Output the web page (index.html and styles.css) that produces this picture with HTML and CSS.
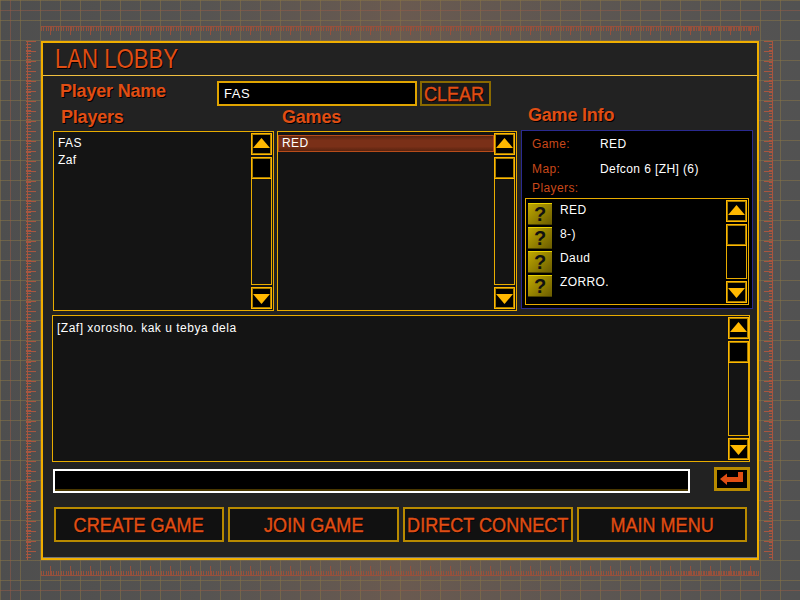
FILE: index.html
```html
<!DOCTYPE html>
<html lang="en">
<head>
    <meta charset="UTF-8">
    <title>LAN Lobby</title>
    <link rel="stylesheet" href="styles.css">
</head>
<body>
    <div class="screen">
        <div class="ruler ruler-top"></div>
        <div class="ruler ruler-left"></div>

        <main class="panel">
            <h1 class="title"><span class="narrow">LAN LOBBY</span></h1>

            <div class="name-row">
                <label class="heading name-label">Player Name</label>
                <div class="field name-field">FAS</div>
                <button class="clear-btn" type="button"><span class="narrow">CLEAR</span></button>
            </div>

            <div class="lists">
                <section class="col">
                    <h2 class="heading col-heading">Players</h2>
                    <div class="list">
                        <ul class="rows">
                            <li>FAS</li>
                            <li>Zaf</li>
                        </ul>
                        <div class="scrollbar">
                            <div class="arrow up"></div>
                            <div class="track"><div class="thumb"></div></div>
                            <div class="arrow down"></div>
                        </div>
                    </div>
                </section>

                <section class="col">
                    <h2 class="heading col-heading games-heading">Games</h2>
                    <div class="list">
                        <ul class="rows game-rows">
                            <li class="selected">RED</li>
                        </ul>
                        <div class="scrollbar">
                            <div class="arrow up"></div>
                            <div class="track"><div class="thumb"></div></div>
                            <div class="arrow down"></div>
                        </div>
                    </div>
                </section>

                <section class="col info-col">
                    <h2 class="heading info-heading">Game Info</h2>
                    <div class="info">
                        <div class="info-row game-row"><span class="info-label">Game:</span><span>RED</span></div>
                        <div class="info-row map-row"><span class="info-label">Map:</span><span>Defcon 6 [ZH] (6)</span></div>
                        <div class="info-row players-row"><span class="info-label">Players:</span></div>
                        <div class="info-players">
                            <ul class="player-rows">
                                <li><span class="badge">?</span>RED</li>
                                <li><span class="badge">?</span>8-)</li>
                                <li><span class="badge">?</span>Daud</li>
                                <li><span class="badge">?</span>ZORRO.</li>
                            </ul>
                            <div class="scrollbar">
                                <div class="arrow up"></div>
                                <div class="track"><div class="thumb"></div></div>
                                <div class="arrow down"></div>
                            </div>
                        </div>
                    </div>
                </section>
            </div>

            <div class="list chat">
                <div class="chat-text">[Zaf] xorosho. kak u tebya dela</div>
                <div class="scrollbar">
                    <div class="arrow up"></div>
                    <div class="track"><div class="thumb"></div></div>
                    <div class="arrow down"></div>
                </div>
            </div>

            <div class="send-row">
                <div class="chat-input"></div>
                <button class="send-btn" type="button">
                    <svg width="24" height="16" viewBox="0 0 24 16">
                        <path d="M0 8 L7 2.5 V6 H18 V1 H23 V11 H7 V14 Z" fill="#e04e14"/>
                    </svg>
                </button>
            </div>

            <div class="actions">
                <button class="action-btn" type="button"><span class="narrow">CREATE GAME</span></button>
                <button class="action-btn" type="button"><span class="narrow">JOIN GAME</span></button>
                <button class="action-btn" type="button"><span class="narrow">DIRECT CONNECT</span></button>
                <button class="action-btn" type="button"><span class="narrow">MAIN MENU</span></button>
            </div>
        </main>

        <div class="ruler ruler-right"></div>
        <div class="ruler ruler-bottom"></div>
    </div>
</body>
</html>
```

FILE: styles.css
```css
* {
    box-sizing: border-box;
}

body {
    margin: 0;
    width: 800px;
    height: 600px;
    overflow: hidden;
    font-family: "Liberation Sans", Arial, sans-serif;
    color: #fff;
    background-color: #505050;
}

ul {
    list-style: none;
    margin: 0;
    padding: 0;
}

button {
    font-family: inherit;
    padding: 0;
}

.narrow {
    display: inline-block;
    flex: none;
    transform: scaleX(0.86);
    white-space: nowrap;
}

.screen {
    width: 800px;
    height: 600px;
    display: grid;
    grid-template-columns: 41px 718px 41px;
    grid-template-rows: 41px 519px 40px;
    background:
        linear-gradient(rgba(150, 90, 70, 0.5), rgba(150, 90, 70, 0.5)) 0 10px / 100% 1px no-repeat,
        linear-gradient(rgba(150, 90, 70, 0.5), rgba(150, 90, 70, 0.5)) 0 590px / 100% 1px no-repeat,
        linear-gradient(rgba(150, 90, 70, 0.5), rgba(150, 90, 70, 0.5)) 10px 0 / 1px 100% no-repeat,
        repeating-linear-gradient(90deg, rgba(135, 115, 70, 0.55) 0 1px, transparent 1px 20px),
        repeating-linear-gradient(180deg, rgba(135, 115, 70, 0.55) 0 1px, transparent 1px 20px),
        linear-gradient(90deg, #4e4e4e 0, #565452 25%, #6a5a50 50%, #5c5652 75%, #525252 100%);
}

/* rulers */
.ruler-top {
    grid-column: 2;
    grid-row: 1;
    height: 10px;
    margin-top: 26px;
    background:
        linear-gradient(#96503c, #96503c) 0 0 / 100% 1px no-repeat,
        repeating-linear-gradient(90deg, #96503c 0 1px, transparent 1px 20px) 9px 0 / 100% 9px no-repeat,
        repeating-linear-gradient(90deg, #96503c 0 1px, transparent 1px 2.5px) 0 0 / 100% 5px no-repeat;
}

.ruler-bottom {
    grid-column: 2;
    grid-row: 3;
    height: 10px;
    margin-top: 6px;
    background:
        linear-gradient(#96503c, #96503c) 0 100% / 100% 1px no-repeat,
        repeating-linear-gradient(90deg, #96503c 0 1px, transparent 1px 20px) 9px 100% / 100% 10px no-repeat,
        repeating-linear-gradient(90deg, #96503c 0 1px, transparent 1px 2.5px) 0 100% / 100% 5px no-repeat;
}

.ruler-left {
    grid-column: 1;
    grid-row: 2;
    width: 14px;
    margin-left: 26px;
    background:
        linear-gradient(#a8553f, #a8553f) 1px 0 / 1px 100% no-repeat,
        repeating-linear-gradient(180deg, #a8553f 0 1px, transparent 1px 10px) 0 0 / 10px 100% no-repeat,
        repeating-linear-gradient(180deg, #a8553f 0 1px, transparent 1px 3px) 0 0 / 5px 100% no-repeat;
}

.ruler-right {
    grid-column: 3;
    grid-row: 2;
    width: 14px;
    background:
        linear-gradient(#a8553f, #a8553f) 100% 0 / 1px 100% no-repeat,
        repeating-linear-gradient(180deg, #a8553f 0 1px, transparent 1px 10px) 100% 0 / 9px 100% no-repeat,
        repeating-linear-gradient(180deg, #a8553f 0 1px, transparent 1px 3px) 100% 0 / 4px 100% no-repeat;
}

/* main panel */
.panel {
    grid-column: 2;
    grid-row: 2;
    border: 2px solid #f0ae00;
    background-color: #222;
    box-shadow: inset 0 -1px 0 #777;
}

.title {
    height: 33px;
    margin: 0;
    padding-left: 12px;
    border-bottom: 1px solid #f0c040;
    font-size: 27px;
    font-weight: normal;
    line-height: 32px;
    color: #e04e14;
    text-shadow: 1px 1px 0 #000;
}

.title .narrow {
    transform: scaleX(0.82);
    transform-origin: left;
}

.heading {
    font-size: 18px;
    font-weight: bold;
    letter-spacing: -0.2px;
    color: #e04e14;
    text-shadow: 1px 1px 0 #000;
}

.name-row {
    display: flex;
    align-items: center;
    gap: 3px;
    height: 25px;
    margin-top: 5px;
    padding-left: 17px;
}

.name-label {
    width: 154px;
    padding-bottom: 4px;
}

.field {
    width: 200px;
    height: 25px;
    padding-left: 5px;
    border: 2px solid #e0a400;
    background-color: #000;
    font-size: 13px;
    line-height: 22px;
    letter-spacing: 0.5px;
}

.clear-btn {
    display: flex;
    align-items: center;
    justify-content: center;
    width: 71px;
    height: 25px;
    padding-right: 2px;
    border: 2px solid #8a6a00;
    background-color: #1a1a1a;
    font-size: 21px;
    line-height: 21px;
    color: #e04e14;
    -webkit-text-stroke: 0.4px #e04e14;
    text-shadow: 1px 1px 0 #000;
}

/* three columns */
.lists {
    display: grid;
    grid-template-columns: 221px 240px 233px;
    gap: 3px;
    margin-left: 10px;
}

.info-col {
    margin-left: 1px;
}

.col-heading {
    height: 25px;
    margin: 0;
    padding-left: 8px;
    line-height: 23px;
}

.games-heading {
    padding-left: 5px;
}

.info-heading {
    height: 24px;
    margin: 0;
    padding-left: 7px;
    line-height: 19px;
}

.list {
    display: flex;
    height: 180px;
    border: 1px solid #e8ac00;
    background-color: #141414;
}

.rows {
    flex: 1;
    padding: 3px 0 0 4px;
    font-size: 12px;
    line-height: 17px;
    letter-spacing: 0.4px;
}

.game-rows {
    padding-left: 0;
}

.selected {
    height: 17px;
    padding-left: 3px;
    border: 1px solid #b84c1a;
    background: linear-gradient(#5a2410, #7a3018 30%, #7a3018 70%, #5a2410);
    line-height: 15px;
}

/* scrollbar */
.scrollbar {
    display: flex;
    flex-direction: column;
    gap: 2px;
    flex: none;
    width: 21px;
    margin: 1px 1px 1px 0;
}

.arrow {
    display: flex;
    justify-content: center;
    flex: none;
    height: 22px;
    border: 1px solid #ffb800;
    background-color: #000;
    box-shadow: inset 0 0 0 1px #a87e00;
}

.arrow::before {
    content: "";
    width: 17px;
    height: 10px;
    background-color: #ffb800;
}

.up {
    align-items: flex-start;
    padding-top: 4px;
}

.up::before {
    clip-path: polygon(50% 0, 100% 100%, 0 100%);
}

.down {
    align-items: flex-end;
    padding-bottom: 4px;
}

.down::before {
    clip-path: polygon(0 0, 100% 0, 50% 100%);
}

.track {
    flex: 1;
    border: 1px solid #e8ac00;
    border-top: 0;
}

.thumb {
    width: 21px;
    height: 22px;
    margin-left: -1px;
    border: 1px solid #ffb800;
    background-color: #000;
    box-shadow: inset 0 0 0 1px #a87e00;
}

/* game info */
.info {
    height: 179px;
    padding: 0 3px;
    border: 1px solid #2a2a90;
    background-color: #000;
    font-size: 12px;
    letter-spacing: 0.4px;
}

.info-row {
    display: flex;
    align-items: center;
}

.game-row {
    height: 26px;
}

.map-row {
    height: 24px;
}

.players-row {
    height: 14px;
}

.info-label {
    width: 75px;
    padding-left: 7px;
    color: #c8481a;
}

.info-players {
    display: flex;
    height: 107px;
    margin-top: 3px;
    border: 1px solid #e8ac00;
}

.player-rows {
    flex: 1;
    display: flex;
    flex-direction: column;
    gap: 2px;
    padding: 4px 0 0 2px;
}

.player-rows li {
    display: flex;
    align-items: flex-start;
    height: 22px;
}

.badge {
    width: 24px;
    height: 22px;
    margin-right: 8px;
    border-top: 1px solid #e8d000;
    border-bottom: 1px solid #4a4000;
    background: linear-gradient(135deg, #c0a800, #6a5c00);
    font-size: 20px;
    font-weight: bold;
    line-height: 21px;
    text-align: center;
    letter-spacing: 0;
    color: #111;
}

/* chat */
.chat {
    width: 698px;
    height: 147px;
    margin: 4px 0 0 9px;
    padding: 1px 0;
}

.chat-text {
    flex: 1;
    padding: 3px 0 0 4px;
    font-size: 12px;
    line-height: 17px;
    letter-spacing: 0.5px;
}

.chat .scrollbar {
    margin: 0;
}

.send-row {
    display: flex;
    align-items: flex-start;
    gap: 24px;
    margin: 5px 0 0 10px;
}

.chat-input {
    width: 637px;
    height: 24px;
    margin-top: 2px;
    border: 2px solid #fff;
    background-color: #000;
    box-shadow: inset 0 -2px 0 #4a3800;
}

.send-btn {
    display: flex;
    align-items: center;
    justify-content: center;
    width: 36px;
    height: 24px;
    border: 3px solid #b88a00;
    background-color: #000;
}

.actions {
    display: grid;
    grid-template-columns: repeat(4, minmax(0, 1fr));
    gap: 4px;
    width: 693px;
    margin: 14px 0 0 11px;
}

.action-btn {
    display: flex;
    align-items: center;
    justify-content: center;
    height: 35px;
    border: 2px solid #b88a00;
    background-color: #111;
    font-size: 21px;
    color: #e04e14;
    -webkit-text-stroke: 0.4px #e04e14;
    text-shadow: 1px 1px 0 #000;
}
```
